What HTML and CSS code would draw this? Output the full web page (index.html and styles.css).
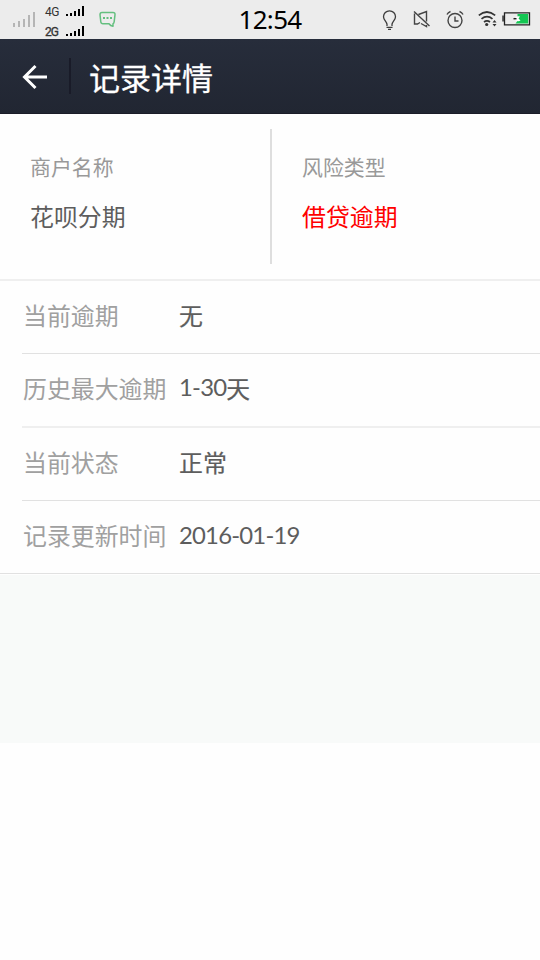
FILE: index.html
```html
<!DOCTYPE html>
<html lang="zh-CN">
<head>
<meta charset="utf-8">
<title>记录详情</title>
<link rel="stylesheet" href="styles.css">
</head>
<body>
<div class="status">
  <svg class="sim" width="23" height="18" viewBox="0 0 23 18"><path fill="#b5b5b5" d="M0 12h2v4H0zM5 10h2v6H5zM10 8h2v8h-2zM15 4h2v12h-2zM20 1h2v15h-2z"/></svg>
  <div class="nets">
    <div class="net"><span class="net-name">4G</span><svg width="19" height="11" viewBox="0 0 19 11"><path d="M0 8h2v2H0zM4 7h2v3H4zM8 5h2v5H8zM12 3h2v7h-2zM16 0h2v10h-2z"/></svg></div>
    <div class="net second"><span class="net-name">2G</span><svg width="19" height="11" viewBox="0 0 19 11"><path d="M0 8h2v2H0zM4 7h2v3H4zM8 5h2v5H8zM12 3h2v7h-2zM16 0h2v10h-2z"/></svg></div>
  </div>
  <svg class="msg" width="18" height="17" viewBox="0 0 18 17"><path d="M3 1.500h11q2.200 0 2 2.200l-.8 7q-.2 1.800-1.200 2v2.600q-2.500-.5-4-2.600H4q-2 0-2.200-2L1 3.700Q1 1.500 3 1.500z" fill="none" stroke="#64bf7f" stroke-width="1.500" stroke-linejoin="round"/><path fill="#64bf7f" d="M4 6h2v2H4zM7.500 6h2v2h-2zM11 6h2v2h-2z"/></svg>
  <div class="clock">12:54</div>
  <div class="tray">
    <svg width="15" height="22" viewBox="0 0 15 22"><path d="M5 16v-1.700C4.500 11.500 1.500 9.700 1.500 6.700a6 5.900 0 0 1 12 0c0 3-3 4.800-3.500 7.600V16M4.500 17.300h6M6 19.300h3" fill="none" stroke="#3c3c3c" stroke-width="1.300"/></svg>
    <svg class="mute" width="18" height="18" viewBox="0 0 18 18"><path d="M1.500 3.500v10.500H4.500L7 12.500M5.500 4.500L13.500 1.500v10M8 13.500l5.500 3V15M1 1.500l15.500 14.500" fill="none" stroke="#444" stroke-width="1.400"/></svg>
    <svg class="alarm" width="18" height="19" viewBox="0 0 18 19"><g fill="none" stroke="#444" stroke-width="1.400"><circle cx="9" cy="10.500" r="7"/><path d="M9 6.500v4.500h3.500M1 4.500Q2 2.500 4.500 1.500M13.500 1.500Q16 2.500 17 4.500"/></g></svg>
    <svg class="wifi" width="19" height="18" viewBox="0 0 19 18"><path d="M.8 5.300q8-6.600 16.400 0M3.500 8.800q5.500-4.500 11 0M6 12q3-2.300 6 0" fill="none" stroke="#333" stroke-width="1.700"/><circle cx="8.700" cy="14.500" r="1.600" fill="#333"/><path d="M14.500 12.500l2-2.500 2 2.500zM14.500 14l2 2.500 2-2.500z" fill="#333"/></svg>
    <svg class="battery" width="29" height="14" viewBox="0 0 29 14"><path d="M2.500.8h25v12h-25zM1 3.500v6" fill="none" stroke="#222" stroke-width="1.300"/><path d="M15.500 2h10.700v9.400H13.500l2-2.400z" fill="#13c652"/><path d="M13 5.500q2.500-2 5-1l-1.500 2 2 2q-2.500 1.500-5.500-.5z" fill="#fff"/><path d="M11.500 6.700h3" stroke="#222" stroke-width="1.500"/></svg>
  </div>
</div>
<header class="header">
  <svg class="back" width="26" height="26" viewBox="0 0 26 26"><path d="M13.500 2L2.500 13l11 11M2.500 13H25" fill="none" stroke="#fff" stroke-width="3"/></svg>
  <div class="split"></div>
  <h1 class="title">记录详情</h1>
</header>
<section class="summary">
  <div class="cell"><div class="label">商户名称</div><div class="value">花呗分期</div></div>
  <div class="cell right"><div class="label">风险类型</div><div class="value danger">借贷逾期</div></div>
</section>
<section class="list">
  <div class="row"><span class="key">当前逾期</span><span class="val">无</span></div>
  <div class="row soft"><span class="key">历史最大逾期</span><span class="val mixed"><span class="num">1-30</span>天</span></div>
  <div class="row"><span class="key">当前状态</span><span class="val">正常</span></div>
  <div class="row last"><span class="key">记录更新时间</span><span class="val"><span class="num date">2016-01-19</span></span></div>
</section>
<div class="filler"></div>
</body>
</html>
```
FILE: styles.css
```css
* { box-sizing: border-box; }
body {
  margin: 0;
  width: 540px;
  height: 960px;
  overflow: hidden;
  background: #fefefe;
  font-family: "Noto Sans CJK SC", sans-serif;
}
svg { display: block; flex: none; }
.status {
  position: relative;
  display: flex;
  height: 39px;
  background: #ececec;
}
.sim { margin: 11px 0 0 13px; }
.nets { margin: 6px 0 0 9px; }
.net { display: flex; height: 20px; width: 40px; }
.net svg { margin-left: auto; }
.net-name {
  font: 12px/13px Roboto, sans-serif;
  letter-spacing: -0.6px;
  color: #333;
}
.second .net-name { -webkit-text-stroke: 0.3px #333; letter-spacing: -1px; }
.msg { margin: 11px 0 0 14px; }
.clock {
  position: absolute;
  left: 0;
  width: 540px;
  text-align: center;
  font: 26px/38px "Noto Sans", sans-serif;
  letter-spacing: -0.7px;
  color: #000;
}
.tray { display: flex; margin-left: auto; padding: 10px 9px 0 0; }
.mute { margin-left: 16px; }
.alarm { margin-left: 15px; }
.wifi { margin-left: 14px; }
.battery { margin: 2px 0 0 5px; }
.tray { margin-right: 0; }
.header {
  display: flex;
  align-items: center;
  height: 75px;
  background: linear-gradient(#272d3b, #212632);
  border-bottom: 1px solid #1b1c28;
}
.back { margin-left: 22px; margin-top: 2px; }
.split { width: 2px; height: 36px; margin-left: 21px; background: #191b28; }
.title {
  margin: 1px 0 0 18px;
  font-size: 31px;
  line-height: 44px;
  font-weight: 400;
  -webkit-text-stroke: 0.3px #fff;
  color: #fff;
}
.summary {
  display: flex;
  height: 167px;
  padding: 15px 0;
  border-bottom: 2px solid #efefef;
}
.cell { width: 270px; height: 135px; padding: 22px 0 0 30px; }
.right { border-left: 2px solid #dedede; }
.label { font-size: 20.9px; line-height: 30px; color: #999; }
.value { margin-top: 17px; font-size: 23.9px; line-height: 36px; color: #5d5d5d; }
.danger { color: #f00; }
.row {
  display: flex;
  align-items: center;
  height: 73px;
  margin-left: 22px;
  padding: 0 0 5px 1px;
  border-bottom: 1px solid #e1e1e1;
  font-size: 23.9px;
  line-height: 36px;
}
.row.soft { height: 74px; border-bottom: 2px solid #efefef; }
.row.last { margin-left: 0; padding-left: 23px; }
.key { width: 156px; color: #a0a0a0; }
.val { color: #5d5d5d; -webkit-text-stroke: 0.2px #5d5d5d; }
.num {
  display: inline-block;
  margin-top: -3px;
  font-family: Lato, sans-serif;
  letter-spacing: -0.8px;
  -webkit-text-stroke: 0;
}
.mixed { display: flex; }
.mixed .num { margin-top: -1px; }
.filler { height: 169px; border-top: 1px solid #fefefe; background: #f8faf9; }
```
